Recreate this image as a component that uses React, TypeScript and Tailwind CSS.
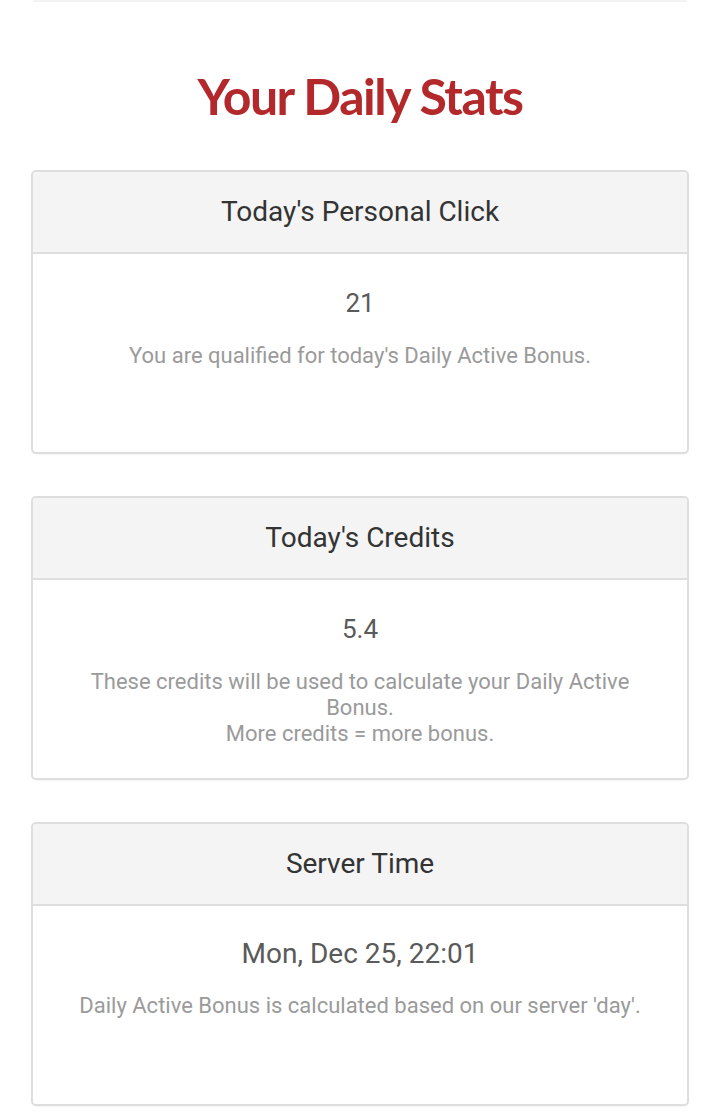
import React from "react";

type Stat = {
  title: string;
  value: string;
  big?: boolean;
  lines: string[];
};

const stats: Stat[] = [
  {
    title: "Today's Personal Click",
    value: "21",
    lines: ["You are qualified for today's Daily Active Bonus."],
  },
  {
    title: "Today's Credits",
    value: "5.4",
    lines: [
      "These credits will be used to calculate your Daily Active Bonus.",
      "More credits = more bonus.",
    ],
  },
  {
    title: "Server Time",
    value: "Mon, Dec 25, 22:01",
    big: true,
    lines: ["Daily Active Bonus is calculated based on our server 'day'."],
  },
];

function StatCard({ stat }: { stat: Stat }) {
  return (
    <div className="rounded-[5px] border-2 border-[#dedede] bg-white overflow-hidden shadow-[0_1px_1px_rgba(0,0,0,0.04)]">
      <div className="h-[82px] flex items-center justify-center bg-[#f4f4f4] border-b-2 border-[#dedede] text-[28px] text-[#333]">
        {stat.title}
      </div>
      <div className="min-h-[198px] px-[40px] pt-[31px] pb-[30px] text-center">
        <div
          className={
            stat.big
              ? "text-[28px] leading-[34px] text-[#5a5a5a]"
              : "text-[26px] leading-[36px] text-[#5a5a5a]"
          }
        >
          {stat.value}
        </div>
        <div className="mt-[22px] text-[22px] leading-[26px] text-[#9a9a9a]">
          {stat.lines.map((l) => (
            <p key={l}>{l}</p>
          ))}
        </div>
      </div>
    </div>
  );
}

export default function App() {
  return (
    <div
      className="w-[720px] min-h-[1119px] bg-white"
      style={{ fontFamily: "Roboto, 'Liberation Sans', sans-serif" }}
    >
      <div className="mx-[33px] h-[2px] bg-[#f3f3f3]"></div>
      <h1
        className="pt-[64px] pb-[44px] text-center text-[50px] leading-[60px] font-bold tracking-[-1.5px] text-[#b3282a]"
        style={{ fontFamily: "Lato, 'Liberation Sans', sans-serif" }}
      >
        Your Daily Stats
      </h1>
      <div className="px-[31px] flex flex-col gap-[42px]">
        {stats.map((s) => (
          <StatCard key={s.title} stat={s} />
        ))}
      </div>
    </div>
  );
}
